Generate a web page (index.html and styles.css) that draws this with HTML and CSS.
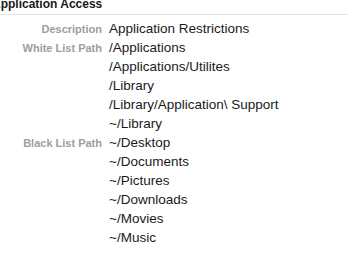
FILE: index.html
```html
<!DOCTYPE html>
<html>
<head>
<meta charset="utf-8">
<link rel="stylesheet" href="styles.css">
</head>
<body>
<div class="header"><div class="title">Application Access</div></div>
<div class="grid">
  <div class="label">Description</div><div class="value">Application Restrictions</div>
  <div class="label">White List Path</div><div class="value">/Applications</div>
  <div class="label"></div><div class="value">/Applications/Utilites</div>
  <div class="label"></div><div class="value">/Library</div>
  <div class="label"></div><div class="value">/Library/Application\ Support</div>
  <div class="label"></div><div class="value">~/Library</div>
  <div class="label">Black List Path</div><div class="value">~/Desktop</div>
  <div class="label"></div><div class="value">~/Documents</div>
  <div class="label"></div><div class="value">~/Pictures</div>
  <div class="label"></div><div class="value">~/Downloads</div>
  <div class="label"></div><div class="value">~/Movies</div>
  <div class="label"></div><div class="value">~/Music</div>
</div>
</body>
</html>
```
FILE: styles.css
```css
html, body {
  margin: 0;
  padding: 0;
  background: #ffffff;
  font-family: "Liberation Sans", Arial, sans-serif;
  overflow: hidden;
}
.header {
  display: flow-root;
  width: 348px;
  height: 14px;
  border-bottom: 1px solid #e3e3e3;
}
.title {
  font-size: 12px;
  font-weight: bold;
  line-height: 14px;
  color: #1a1a1a;
  margin-top: -3px;
  margin-left: -8px;
  white-space: nowrap;
}
.grid {
  display: grid;
  grid-template-columns: 102px 1fr;
  grid-auto-rows: 19px;
  column-gap: 7px;
  align-items: start;
  padding-top: 4px;
}
.label {
  text-align: right;
  font-size: 11px;
  font-weight: bold;
  color: #9d9d9d;
  line-height: 17px;
  padding-top: 2px;
  white-space: nowrap;
}
.value {
  font-size: 13.5px;
  line-height: 19px;
  color: #1a1a1a;
  white-space: nowrap;
}
```
